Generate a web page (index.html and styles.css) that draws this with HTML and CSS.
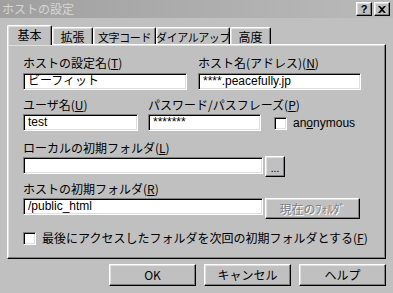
FILE: index.html
```html
<!DOCTYPE html>
<html lang="ja">
<head>
<meta charset="utf-8">
<title>ホストの設定</title>
<link rel="stylesheet" href="styles.css">
</head>
<body>
<div class="titlebar">
  <span class="title">ホストの設定</span>
  <div class="caption-btns">
    <span class="cbtn cbtn-help">?</span>
    <span class="cbtn cbtn-close"><svg width="8" height="7" viewBox="0 0 8 7"><path d="M0 0h2l2 2 2-2h2L5 3.5 8 7H6L4 5 2 7H0l3-3.5z" fill="#000"/></svg></span>
  </div>
</div>
<div class="content">
  <div class="tabs">
    <div class="tab tab-active tw1">基本</div>
    <div class="tab tw2">拡張</div>
    <div class="tab tw3 tab-narrow">文字コード</div>
    <div class="tab tw4 tab-narrow">ダイアルアップ</div>
    <div class="tab tw5">高度</div>
  </div>
  <div class="panel">
    <div class="row row1">
      <div class="field f-name">
        <div class="lbl">ホストの設定名(<u>T</u>)</div>
        <div class="edit">ビーフィット</div>
      </div>
      <div class="field f-host">
        <div class="lbl">ホスト名(アドレス)(<u>N</u>)</div>
        <div class="edit">****.peacefully.jp</div>
      </div>
    </div>
    <div class="row row2">
      <div class="field f-user">
        <div class="lbl">ユーザ名(<u>U</u>)</div>
        <div class="edit">test</div>
      </div>
      <div class="field f-pass">
        <div class="lbl">パスワード/パスフレーズ(<u>P</u>)</div>
        <div class="edit">*******</div>
      </div>
      <div class="check check-anon">
        <span class="box"></span>
        <span class="check-label">an<u>o</u>nymous</span>
      </div>
    </div>
    <div class="lbl lbl-local">ローカルの初期フォルダ(<u>L</u>)</div>
    <div class="row row3">
      <div class="edit edit-wide"></div>
      <div class="btn btn-browse">...</div>
    </div>
    <div class="lbl lbl-host">ホストの初期フォルダ(<u>R</u>)</div>
    <div class="row row4">
      <div class="edit edit-wide">/public_html</div>
      <div class="btn btn-current btn-disabled">現在のﾌｫﾙﾀﾞ</div>
    </div>
    <div class="check check-last">
      <span class="box"></span>
      <span class="check-label">最後にアクセスしたフォルダを次回の初期フォルダとする(<u>F</u>)</span>
    </div>
  </div>
  <div class="footer">
    <div class="btn btn-dlg">OK</div>
    <div class="btn btn-dlg">キャンセル</div>
    <div class="btn btn-dlg">ヘルプ</div>
  </div>
</div>
</body>
</html>
```

FILE: styles.css
```css
* {
  box-sizing: border-box;
}

html,
body {
  margin: 0;
  padding: 0;
}

body {
  width: 393px;
  height: 293px;
  overflow: hidden;
  background: #c0c0c0;
  color: #000;
  font-family: "Liberation Sans", "Noto Sans CJK JP", sans-serif;
  font-size: 12px;
  line-height: 14px;
}

u {
  text-decoration: underline;
  text-underline-offset: 1px;
}

/* title bar */
.titlebar {
  height: 18px;
  display: flex;
  align-items: center;
  justify-content: space-between;
  padding: 0 3px 0 2px;
  background: linear-gradient(to right, #a0a0a0, #bababa);
}

.title {
  color: #d6d6d6;
  font-family: "Noto Sans CJK JP", sans-serif;
  font-size: 12px;
  line-height: 14px;
}

.caption-btns {
  display: flex;
  gap: 2px;
}

.cbtn {
  width: 16px;
  height: 14px;
  display: flex;
  align-items: center;
  justify-content: center;
  background: #c0c0c0;
  border: 1px solid;
  border-color: #fff #000 #000 #fff;
  box-shadow: inset -1px -1px #808080, inset 1px 1px #dfdfdf;
  font-family: "Liberation Sans", sans-serif;
  font-weight: bold;
  font-size: 11px;
  line-height: 11px;
}

/* content */
.content {
  padding: 7px 7px 0 7px;
}

.tabs {
  display: flex;
  align-items: flex-end;
  height: 19px;
}

.tab {
  height: 17px;
  display: flex;
  align-items: center;
  justify-content: center;
  background: #c0c0c0;
  border-left: 1px solid #fff;
  border-top: 1px solid #fff;
  border-right: 1px solid #000;
  border-radius: 2px 2px 0 0;
  box-shadow: inset -1px 0 #808080, inset 1px 1px #dfdfdf;
  font-family: "Noto Sans CJK JP", sans-serif;
  white-space: nowrap;
  padding-top: 1px;
}

.tab-narrow {
  font-size: 11px;
  letter-spacing: -0.4px;
}

.tab-active {
  height: 20px;
  margin-bottom: -1px;
  position: relative;
  z-index: 1;
  padding-top: 0;
  padding-bottom: 2px;
}

.tw1 { width: 45px; }
.tw2 { width: 41px; }
.tw3 { width: 63px; }
.tw4 { width: 74px; }
.tw5 { width: 41px; }

.panel {
  height: 215px;
  border: 1px solid;
  border-color: #fff #000 #000 #fff;
  box-shadow: inset -1px -1px #808080, inset 1px 1px #dfdfdf;
  padding: 11px 0 0 15px;
}

.row {
  display: flex;
  align-items: flex-start;
}

.field {
  display: flex;
  flex-direction: column;
}

.lbl {
  height: 14px;
  white-space: nowrap;
  font-family: "Noto Sans CJK JP", sans-serif;
}

.edit {
  height: 17px;
  background: #fff;
  border: 1px solid;
  border-color: #808080 #fff #fff #808080;
  box-shadow: inset 1px 1px #000, inset -1px -1px #dfdfdf;
  padding: 0 3px 0 4px;
  line-height: 15px;
  white-space: nowrap;
  overflow: hidden;
}

.row1 {
  gap: 11px;
}

.row1 .edit {
  margin-top: 3px;
}

.f-name { width: 164px; }
.f-host { width: 163px; }

.row2 {
  margin-top: 8px;
  align-items: flex-end;
}

.row2 .edit {
  margin-top: 2px;
}

.f-user { width: 115px; }
.f-pass { width: 113px; margin-left: 10px; }

.check {
  display: flex;
  align-items: center;
}

.box {
  width: 13px;
  height: 13px;
  flex: none;
  background: #fff;
  border: 1px solid;
  border-color: #808080 #fff #fff #808080;
  box-shadow: inset 1px 1px #000, inset -1px -1px #dfdfdf;
}

.check-label {
  margin-left: 6px;
  white-space: nowrap;
}

.check-anon {
  margin-left: 13px;
  margin-bottom: 1px;
}

.lbl-local {
  margin-top: 10px;
}

.row3 {
  margin-top: 2px;
}

.edit-wide {
  width: 240px;
}

.btn {
  display: flex;
  align-items: center;
  justify-content: center;
  background: #c0c0c0;
  border: 1px solid;
  border-color: #fff #000 #000 #fff;
  box-shadow: inset -1px -1px #808080, inset 1px 1px #dfdfdf;
  white-space: nowrap;
  font-family: "Noto Sans CJK JP", sans-serif;
}

.btn-browse {
  width: 20px;
  height: 21px;
  margin-left: 2px;
  margin-top: -1px;
  font-size: 10px;
  line-height: 10px;
  padding-top: 3px;
}

.lbl-host {
  margin-top: 5px;
}

.row4 {
  margin-top: 2px;
}

.btn-current {
  width: 95px;
  height: 21px;
  margin-left: 2px;
}

.btn-disabled {
  color: #808080;
  text-shadow: 1px 1px #fff;
}

.check-last {
  margin-top: 12px;
}

.check-last .check-label {
  font-family: "Noto Sans CJK JP", sans-serif;
}

.footer {
  display: flex;
  justify-content: flex-end;
  gap: 8px;
  margin-top: 5px;
}

.btn-dlg {
  width: 87px;
  height: 22px;
}
```
